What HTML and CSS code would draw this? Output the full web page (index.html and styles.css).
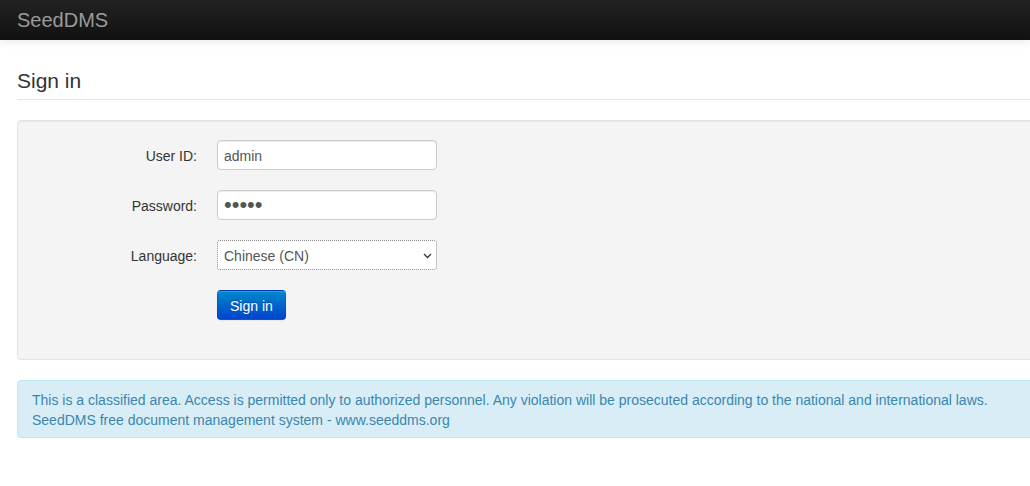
FILE: index.html
```html
<!DOCTYPE html>
<html lang="en">
<head>
<meta charset="utf-8">
<title>SeedDMS - Sign in</title>
<link rel="stylesheet" href="styles.css">
</head>
<body>
<div class="navbar">
  <a class="brand" href="#">SeedDMS</a>
</div>
<div class="container">
  <h3 class="page-header">Sign in</h3>
  <form class="well form-horizontal">
    <div class="control-group">
      <label class="control-label" for="login">User ID:</label>
      <div class="controls"><input class="input" type="text" id="login" value="admin"></div>
    </div>
    <div class="control-group">
      <label class="control-label" for="pwd">Password:</label>
      <div class="controls"><input class="input password" type="password" id="pwd" value="admin"></div>
    </div>
    <div class="control-group">
      <label class="control-label" for="lang">Language:</label>
      <div class="controls">
        <div class="select-wrap">
          <select class="select" id="lang">
            <option>Chinese (CN)</option>
          </select>
          <svg class="chevron" width="9" height="6" viewBox="0 0 9 6"><path d="M1 1l3.5 3.5L8 1" fill="none" stroke="#333" stroke-width="1.3"/></svg>
        </div>
      </div>
    </div>
    <div class="control-group">
      <div class="controls offset"><button type="button" class="btn-primary">Sign in</button></div>
    </div>
  </form>
  <div class="alert">
    This is a classified area. Access is permitted only to authorized personnel. Any violation will be prosecuted according to the national and international laws.<br>
    SeedDMS free document management system - www.seeddms.org
  </div>
</div>
</body>
</html>
```
FILE: styles.css
```css
html, body {
  margin: 0;
  padding: 0;
  overflow: hidden;
  background: #fff;
}
body {
  font-family: "Liberation Sans", Arial, sans-serif;
  font-size: 14px;
  line-height: 20px;
  color: #333;
}
.navbar {
  height: 40px;
  background: linear-gradient(to bottom, #222222, #111111);
  box-shadow: 0 1px 10px rgba(0, 0, 0, 0.1);
  display: flex;
  align-items: flex-start;
}
.brand {
  display: block;
  padding: 10px 17px;
  font-size: 20px;
  line-height: 20px;
  color: #9a9a9a;
  text-decoration: none;
}
.container {
  margin-left: 17px;
  width: 1040px;
}
.page-header {
  margin: 29px 0 20px;
  padding: 0 0 6px;
  font-size: 21px;
  line-height: 24px;
  font-weight: normal;
  color: #333;
  border-bottom: 1px solid #e5e5e5;
}
.well {
  margin: 0 0 20px;
  padding: 19px;
  background: #f4f4f4;
  border: 1px solid #e3e3e3;
  border-radius: 4px;
  box-shadow: inset 0 1px 1px rgba(0, 0, 0, 0.05);
}
.control-group {
  display: flex;
  margin-bottom: 20px;
}
.control-label {
  width: 160px;
  padding-top: 6px;
  text-align: right;
  color: #333;
}
.controls {
  margin-left: 20px;
}
.controls.offset {
  margin-left: 180px;
}
.input {
  box-sizing: border-box;
  width: 220px;
  height: 30px;
  margin: 0;
  padding: 5px 6px 3px;
  font-family: "Liberation Sans", Arial, sans-serif;
  font-size: 14px;
  line-height: 20px;
  color: #555;
  background: #fff;
  border: 1px solid #ccc;
  border-radius: 4px;
  box-shadow: inset 0 1px 1px rgba(0, 0, 0, 0.075);
  outline: none;
}
.input.password {
  font-size: 22px;
  letter-spacing: 0;
  padding: 4px 6px 4px;
  line-height: 20px;
}
.select-wrap {
  position: relative;
  width: 220px;
  height: 30px;
}
.select {
  box-sizing: border-box;
  width: 220px;
  height: 30px;
  margin: 0;
  padding: 5px 6px 3px;
  font-family: "Liberation Sans", Arial, sans-serif;
  font-size: 14px;
  color: #555;
  background: #fff;
  border: 1px dotted #8a8a8a;
  border-radius: 3px;
  appearance: none;
  -webkit-appearance: none;
  outline: none;
}
.chevron {
  position: absolute;
  right: 5px;
  top: 13px;
  pointer-events: none;
}
.btn-primary {
  box-sizing: border-box;
  height: 30px;
  padding: 5px 12px 3px;
  font-family: "Liberation Sans", Arial, sans-serif;
  font-size: 14px;
  line-height: 20px;
  color: #fff;
  text-shadow: 0 -1px 0 rgba(0, 0, 0, 0.25);
  background: linear-gradient(to bottom, #0088cc, #0044cc);
  border: 1px solid #0044aa;
  border-color: rgba(0, 0, 0, 0.1) rgba(0, 0, 0, 0.1) rgba(0, 0, 0, 0.25);
  border-radius: 4px;
  box-shadow: inset 0 1px 0 rgba(255, 255, 255, 0.2), 0 1px 2px rgba(0, 0, 0, 0.05);
}
.alert {
  padding: 9px 35px 7px 14px;
  background: #d9edf7;
  border: 1px solid #bce8f1;
  border-radius: 4px;
  color: #3a87ad;
}
```
